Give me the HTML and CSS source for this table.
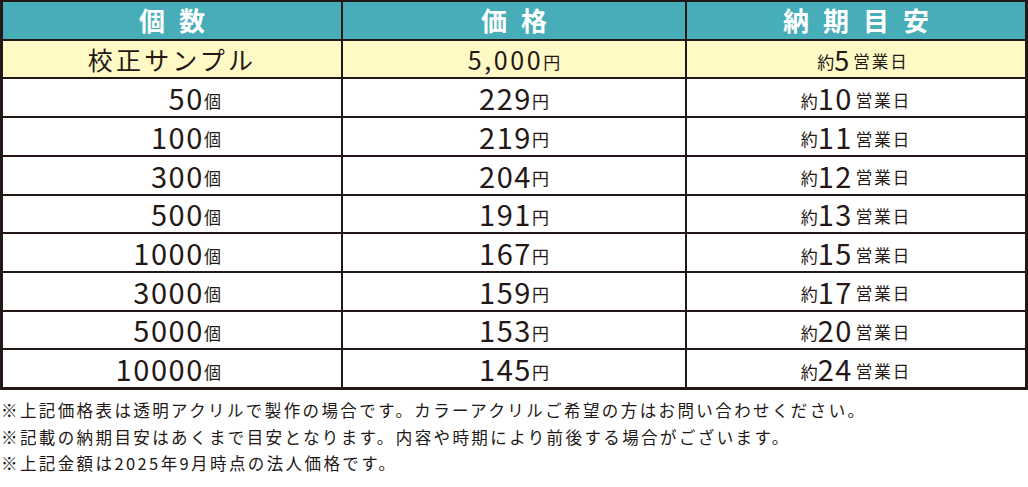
FILE: index.html
```html
<!DOCTYPE html>
<html lang="ja">
<head>
<meta charset="utf-8">
<title>価格表</title>
<link rel="stylesheet" href="styles.css">
</head>
<body>
<div class="price-table">
  <div class="cell head"><span class="head-text">個数</span></div>
  <div class="cell head"><span class="head-text">価格</span></div>
  <div class="cell head"><span class="head-text">納期目安</span></div>

  <div class="cell sample qty-sample">校正サンプル</div>
  <div class="cell sample price"><span class="num-s">5,000</span><span class="unit">円</span></div>
  <div class="cell sample days days-sample"><span class="pre">約</span><span class="num-s">5</span><span class="unit-d">営業日</span></div>

  <div class="cell qty"><span class="num">50</span><span class="unit">個</span></div>
  <div class="cell price"><span class="num">229</span><span class="unit">円</span></div>
  <div class="cell days"><span class="pre">約</span><span class="num">10</span><span class="unit-d">営業日</span></div>

  <div class="cell qty"><span class="num">100</span><span class="unit">個</span></div>
  <div class="cell price"><span class="num">219</span><span class="unit">円</span></div>
  <div class="cell days"><span class="pre">約</span><span class="num">11</span><span class="unit-d">営業日</span></div>

  <div class="cell qty"><span class="num">300</span><span class="unit">個</span></div>
  <div class="cell price"><span class="num">204</span><span class="unit">円</span></div>
  <div class="cell days"><span class="pre">約</span><span class="num">12</span><span class="unit-d">営業日</span></div>

  <div class="cell qty"><span class="num">500</span><span class="unit">個</span></div>
  <div class="cell price"><span class="num">191</span><span class="unit">円</span></div>
  <div class="cell days"><span class="pre">約</span><span class="num">13</span><span class="unit-d">営業日</span></div>

  <div class="cell qty"><span class="num">1000</span><span class="unit">個</span></div>
  <div class="cell price"><span class="num">167</span><span class="unit">円</span></div>
  <div class="cell days"><span class="pre">約</span><span class="num">15</span><span class="unit-d">営業日</span></div>

  <div class="cell qty"><span class="num">3000</span><span class="unit">個</span></div>
  <div class="cell price"><span class="num">159</span><span class="unit">円</span></div>
  <div class="cell days"><span class="pre">約</span><span class="num">17</span><span class="unit-d">営業日</span></div>

  <div class="cell qty"><span class="num">5000</span><span class="unit">個</span></div>
  <div class="cell price"><span class="num">153</span><span class="unit">円</span></div>
  <div class="cell days"><span class="pre">約</span><span class="num">20</span><span class="unit-d">営業日</span></div>

  <div class="cell qty"><span class="num">10000</span><span class="unit">個</span></div>
  <div class="cell price"><span class="num">145</span><span class="unit">円</span></div>
  <div class="cell days"><span class="pre">約</span><span class="num">24</span><span class="unit-d">営業日</span></div>
</div>
<div class="notes">
  <p class="note">※上記価格表は透明アクリルで製作の場合です。カラーアクリルご希望の方はお問い合わせください。</p>
  <p class="note">※記載の納期目安はあくまで目安となります。内容や時期により前後する場合がございます。</p>
  <p class="note">※上記金額は2025年9月時点の法人価格です。</p>
</div>
</body>
</html>
```
FILE: styles.css
```css
* { box-sizing: border-box; }

body {
  margin: 0;
  background: #ffffff;
  color: #231815;
  font-family: "Noto Sans CJK JP", "Noto Sans", sans-serif;
}

.price-table {
  display: grid;
  grid-template-columns: 338px 342px 338px;
  grid-template-rows: repeat(10, 1fr);
  gap: 2px;
  width: 1028px;
  height: 390px;
  padding: 2px 3px 3px 3px;
  background: #231815;
}

.cell {
  display: flex;
  align-items: center;
  justify-content: center;
  background: #ffffff;
  line-height: 1;
  white-space: nowrap;
}

.head {
  background: #46adb9;
  color: #ffffff;
}

.head-text {
  font-size: 26px;
  font-weight: 700;
  letter-spacing: 14px;
  margin-right: -14px;
}

.sample {
  background: #fff9c6;
}

.qty-sample {
  font-size: 25px;
  letter-spacing: 3.2px;
}

.qty {
  justify-content: flex-end;
  padding-right: 120px;
}

.num {
  font-size: 29px;
  letter-spacing: 1.6px;
}

.num-s {
  font-size: 25px;
  letter-spacing: 2.6px;
}

.days-sample {
  padding-left: 14px;
}

.days .num-s {
  font-size: 27px;
  letter-spacing: 1px;
}

.unit {
  font-size: 17px;
  margin-top: 5px;
}

.pre {
  font-size: 17px;
  margin-top: 5px;
}

.unit-d {
  font-size: 16.5px;
  letter-spacing: 2px;
  margin-top: 5px;
  margin-left: 3px;
}

.days .num {
  letter-spacing: 1.5px;
}

.notes {
  padding: 7px 0 0 1px;
}

.note {
  margin: 0;
  font-size: 16.5px;
  line-height: 26.5px;
  letter-spacing: 2.4px;
  white-space: nowrap;
}
```
